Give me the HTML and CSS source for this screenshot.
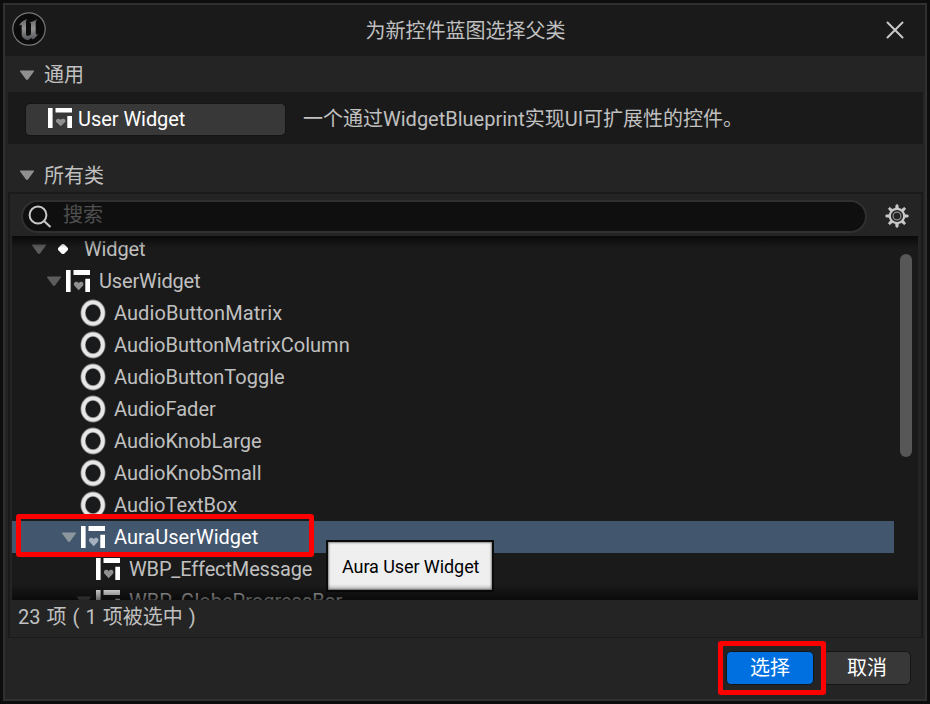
FILE: index.html
```html
<!DOCTYPE html>
<html lang="zh-CN">
<head>
<meta charset="utf-8">
<title>为新控件蓝图选择父类</title>
<link rel="stylesheet" href="styles.css">
</head>
<body>
<svg class="defs" width="0" height="0">
  <defs>
    <linearGradient id="metal" x1="0" y1="0" x2="0" y2="1"><stop offset="0" stop-color="#666"/><stop offset=".45" stop-color="#929292"/><stop offset="1" stop-color="#505257"/></linearGradient>
    <symbol id="arrow" viewBox="0 0 16 11"><path d="M1.500 .5h13q1.200 0 .4 1L9.200 9.200q-1.200 1.400-2.400 0L1.100 1.500Q.3.5 1.500.5z" fill="currentColor"/></symbol>
    <symbol id="widget" viewBox="0 0 24 22" preserveAspectRatio="none"><path d="M0 0h4.600v22H0zM7.500 0H24v5H7.500zM19.300 8.700H24V22h-4.700z" fill="#fff"/><path d="M12.700 20.200 8.500 15.800c-2-2.600 1.600-5.900 4.200-2.800 2.600-3.100 6.200.2 4.200 2.800z" fill="currentColor"/></symbol>
    <symbol id="ring" viewBox="0 0 26 28"><ellipse cx="13" cy="14" rx="9.900" ry="10.800" fill="#181a1c" stroke="#8b8b8b" stroke-width="5.200"/><ellipse cx="13" cy="14" rx="9.900" ry="10.800" fill="none" stroke="#e7e7e7" stroke-width="3.600"/></symbol>
  </defs>
</svg>
<main class="window">
  <header class="titlebar">
    <svg class="logo" viewBox="0 0 36 36"><circle cx="18" cy="18" r="16.200" fill="#0b0b0b" stroke="#777" stroke-width="1.200"/><path d="M8 15C9.200 11.500 12.500 9 16.500 8c-1.200 1.200-1.500 2-1.500 3.400v11.800c0 1.400 1.500 2.200 3.300 1.400 1-.4 1.700-1.100 1.700-2.100V13c0-1.300-.6-1.700-1.500-1.800 3-.5 5.500-1.500 7.800-3.200-1 1.800-1.600 2.500-1.600 4v10.300c0 1.500.7 1.500 2.300.3-1.100 3-3 4.800-5.400 5.800L20.200 27l-3 2.300c-3.500-.4-6.500-2.800-6.500-5.700v-9.100c0-1.200-1.200-.9-2.700.5z" fill="url(#metal)"/></svg>
    <h1>为新控件蓝图选择父类</h1>
    <svg class="close" viewBox="0 0 18 18"><path d="m1.500 1.500 15 15m0-15-15 15" stroke="#c8c8c8" stroke-width="2" stroke-linecap="round"/></svg>
  </header>
  <h2 class="section general"><svg class="arrow"><use href="#arrow"/></svg>通用</h2>
  <div class="band">
    <button class="pick"><svg class="widget small"><use href="#widget"/></svg>User Widget</button>
    <p>一个通过WidgetBlueprint实现UI可扩展性的控件。</p>
  </div>
  <h2 class="section all"><svg class="arrow"><use href="#arrow"/></svg>所有类</h2>
  <section class="panel">
    <div class="toolbar">
      <div class="search"><svg class="lens" viewBox="0 0 24 24"><circle cx="10" cy="10" r="8.400" fill="none" stroke="#c8c8c8" stroke-width="2"/><path d="m16 16 6.500 6" stroke="#c8c8c8" stroke-width="2.200"/></svg><span>搜索</span></div>
      <svg class="gear" viewBox="0 0 24 24"><path d="M10.400 5 11 .8h2l.6 4.200zM10.400 19l.6 4.200h2l.6-4.200zM5 10.400.8 11v2l4.200.6zM19 10.400l4.200.6v2l-4.200.6zM6 8.300 3.300 4.700l1.400-1.400L8.300 6zM18 8.300l2.700-3.600-1.400-1.400L15.700 6zM6 15.700l-2.700 3.600 1.400 1.400L8.300 18zM18 15.700l2.700 3.600-1.400 1.400-3.600-2.700z" fill="#c8c8c8" stroke="#c8c8c8" stroke-width=".6"/><circle cx="12" cy="12" r="7.200" fill="#242424" stroke="#c8c8c8" stroke-width="2.200"/><circle cx="12" cy="12" r="3.900" fill="#242424" stroke="#909090" stroke-width="1.200"/></svg>
    </div>
    <div class="list">
      <div class="rows">
        <div class="row l0 tight"><svg class="arrow"><use href="#arrow"/></svg><svg class="dot" viewBox="0 0 10 10"><path d="M5 0q1 0 1.700.8L9.200 3.300Q10.900 5 9.200 6.700L6.700 9.200Q5 10.900 3.300 9.200L.8 6.700Q-.9 5 .8 3.300L3.300.8Q4 0 5 0z" fill="#fff"/></svg>Widget</div>
        <div class="row l1 tight"><svg class="arrow"><use href="#arrow"/></svg><svg class="widget"><use href="#widget"/></svg>UserWidget</div>
        <div class="row l2 loose"><svg class="ring"><use href="#ring"/></svg>AudioButtonMatrix</div>
        <div class="row l2"><svg class="ring"><use href="#ring"/></svg>AudioButtonMatrixColumn</div>
        <div class="row l2"><svg class="ring"><use href="#ring"/></svg>AudioButtonToggle</div>
        <div class="row l2"><svg class="ring"><use href="#ring"/></svg>AudioFader</div>
        <div class="row l2"><svg class="ring"><use href="#ring"/></svg>AudioKnobLarge</div>
        <div class="row l2"><svg class="ring"><use href="#ring"/></svg>AudioKnobSmall</div>
        <div class="row l2"><svg class="ring"><use href="#ring"/></svg>AudioTextBox</div>
        <div class="row l2 selected"><svg class="arrow"><use href="#arrow"/></svg><svg class="widget"><use href="#widget"/></svg>AuraUserWidget</div>
        <div class="row l3 tight"><svg class="widget"><use href="#widget"/></svg>WBP_EffectMessage</div>
        <div class="row l3"><svg class="arrow"><use href="#arrow"/></svg><svg class="widget"><use href="#widget"/></svg>WBP_GlobeProgressBar</div>
      </div>
      <div class="scroll"></div>
    </div>
    <footer class="status">23 项 ( 1 项被选中 )</footer>
  </section>
  <div class="actions"><button class="primary">选择</button><button>取消</button></div>
</main>
<div class="tooltip">Aura User Widget</div>
<div class="mark mark-row"></div>
<div class="mark mark-button"></div>
</body>
</html>
```
FILE: styles.css
```css
* { box-sizing: border-box; }
body {
  margin: 0;
  padding: 3px;
  width: 930px;
  height: 704px;
  overflow: hidden;
  background: #0d0d0d;
  color: #c0c0c0;
  font: 20px/32px Roboto, "Noto Sans CJK SC", sans-serif;
  white-space: nowrap;
}
svg { display: block; flex: none; }
.defs { position: absolute; }
h1, h2, p { margin: 0; font: inherit; }
.window {
  width: 924px;
  height: 698px;
  border: 2px solid #303030;
  background: #242424;
}
.titlebar {
  display: grid;
  grid-template-columns: 121px 1fr 120px;
  align-items: center;
  height: 51px;
  background: #1a1a1a;
}
.titlebar h1 { text-align: center; }
.logo { width: 36px; height: 36px; margin: -3px 0 0 6px; }
.close { width: 18px; height: 18px; justify-self: end; margin: -1px 21px 0 0; }
.arrow { width: 16px; height: 11px; color: #909090; }
.section { display: flex; align-items: center; gap: 9px; padding-left: 14px; }
.general { height: 36px; padding-top: 2px; }
.all { height: 48px; padding-top: 15px; }
.band {
  display: flex;
  align-items: center;
  gap: 17px;
  height: 52px;
  margin: 0 2px 0 3px;
  padding: 2px 0 0 17px;
  background: #1a1a1a;
}
button {
  display: flex;
  align-items: center;
  justify-content: center;
  padding: 0;
  border: 1px solid #141414;
  border-radius: 5px;
  background: #383838;
  color: #fff;
  font: inherit;
}
.pick { justify-content: flex-start; gap: 6px; width: 261px; height: 33px; padding-left: 22px; letter-spacing: -.05px; }
.widget { width: 24px; height: 22px; color: #909090; }
.widget.small { height: 20px; margin-top: -2px; }
.panel { height: 446px; margin: 0 2px 0 3px; border: 2px solid #1a1a1a; border-bottom-width: 1px; }
.toolbar { display: flex; align-items: center; height: 42px; padding: 3px 12px 0 11px; justify-content: space-between; }
.search {
  display: flex;
  align-items: center;
  gap: 11px;
  width: 846px;
  height: 33px;
  padding-left: 5px;
  border: 2px solid #303030;
  border-radius: 17px;
  background: #0f0f0f;
  color: #505050;
}
.search span { margin-top: -3px; }
.lens { width: 24px; height: 24px; }
.gear { width: 24px; height: 24px; margin-top: -2px; }
.list {
  position: relative;
  display: flex;
  height: 364px;
  margin: 0 3px 0 2px;
  overflow: hidden;
  background: #1a1a1a;
}
.list::before, .list::after { content: ""; position: absolute; left: 0; right: 0; z-index: 1; }
.list::before { top: 0; height: 12px; background: linear-gradient(rgba(0,0,0,.65), transparent); }
.list::after { bottom: 0; height: 16px; background: linear-gradient(transparent, rgba(0,0,0,.6)); }
.rows { width: 882px; margin-top: -3px; }
.row { display: flex; align-items: center; height: 32px; }
.row .arrow { color: #5c5c5c; margin-right: 4px; }
.row .widget, .row .ring { margin-right: 9px; }
.ring { width: 26px; height: 28px; margin-left: -1px; }
.row .ring { margin-right: 8px; }
.tight { letter-spacing: -.15px; }
.loose { letter-spacing: .08px; }
.l0 { padding-left: 19px; }
.l0 .dot { width: 10px; height: 10px; margin: 0 16px 0 7px; }
.l1 { padding-left: 34px; }
.l2 { padding-left: 69px; }
.l3 { padding-left: 84px; }
.row.l3:last-child { padding-left: 64px; }
.row.selected { padding-left: 49px; background: #42566e; color: #fff; }
.selected .arrow { color: #8d959d; }
.selected .widget { color: #a4b0bd; }
.scroll { width: 12px; height: 203px; margin: 18px 0 0 6px; border-radius: 6px; background: #575757; }
.status { height: 36px; padding: 1px 0 0 8px; word-spacing: 1.1px; }
.actions { display: flex; justify-content: flex-end; gap: 9px; padding: 13px 14px 0 0; }
.actions button { width: 88px; height: 34px; }
.actions .primary { background: #0070e0; }
.tooltip {
  position: absolute;
  left: 326px;
  top: 540px;
  width: 168px;
  height: 52px;
  padding: 9px 0 0 14px;
  border: 2px solid #0b0b0b;
  background: #efefef;
  box-shadow: inset 0 0 2px 1px #888;
  color: #000;
  font-size: 18px;
  letter-spacing: -.08px;
}
.mark { position: absolute; border: 5px solid #f00; border-radius: 3px; }
.mark-row { left: 16px; top: 514px; width: 298px; height: 43px; }
.mark-button { left: 718px; top: 641px; width: 108px; height: 54px; }
```
